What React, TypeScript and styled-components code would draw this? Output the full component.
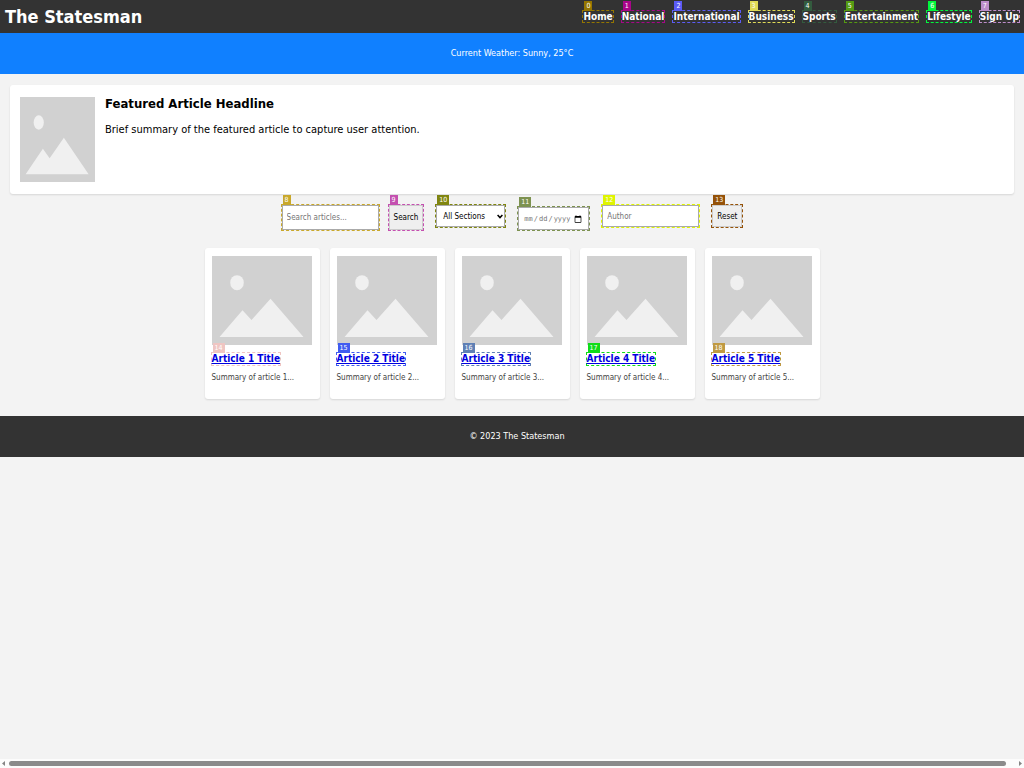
import React from "react";
import styled, { createGlobalStyle } from "styled-components";

const GlobalStyle = createGlobalStyle`
  * { box-sizing: border-box; }
  body {
    margin: 0;
    background: #f3f3f3;
    color: #000;
    font-family: "DejaVu Sans Condensed", "DejaVu Sans", sans-serif;
    font-size: 9px;
  }
`;

const Page = styled.div`
  display: flex;
  flex-direction: column;
  min-height: 100vh;
`;

const Header = styled.header`
  display: flex;
  align-items: center;
  justify-content: space-between;
  height: 33px;
  padding: 0 4px 0 5px;
  background: #333;
  color: #fff;
`;

const SiteTitle = styled.h1`
  margin: 0;
  font-size: 18px;
  line-height: 22px;
`;

const Nav = styled.nav`
  display: flex;
  gap: 7px;
`;

const Mark = styled.span<{ $color: string }>`
  position: relative;
  display: inline-flex;
  border: 1px dashed ${(p) => p.$color};
`;

const Badge = styled.span<{ $color: string }>`
  position: absolute;
  left: 1px;
  bottom: 100%;
  padding: 0 2px;
  background: ${(p) => p.$color};
  color: #fff;
  font-size: 7px;
  font-weight: 400;
  line-height: 10px;
`;

const NavLink = styled.a`
  color: #fff;
  font-size: 10px;
  font-weight: 700;
  line-height: 11px;
  text-decoration: none;
`;

const Weather = styled.section`
  background: #1080ff;
  color: #fff;
  line-height: 12px;
  padding: 14px 0 15px;
  text-align: center;
`;

const Featured = styled.article`
  display: flex;
  gap: 10px;
  margin: 11px 10px 0;
  padding: 12px 10px;
  background: #fff;
  border-radius: 3px;
  box-shadow: 0 1px 2px rgba(0, 0, 0, 0.12);
`;

const FeaturedImage = styled.svg`
  display: block;
  width: 75px;
  height: 85px;
`;

const FeaturedTitle = styled.h2`
  margin: 0 0 12px;
  font-size: 13px;
  line-height: 14px;
`;

const FeaturedText = styled.p`
  margin: 0;
  font-size: 11px;
  line-height: 14px;
`;

const Filters = styled.form`
  display: flex;
  justify-content: center;
  align-items: flex-start;
  gap: 11px;
  margin-top: 10px;
  height: 27px;
`;

const SearchGroup = styled.div`
  display: flex;
  gap: 8px;
`;

const DateGroup = styled.div`
  display: flex;
  align-self: flex-end;
`;

const TextField = styled.input<{ $tall?: boolean }>`
  width: 97px;
  height: ${(p) => (p.$tall ? 25 : 22)}px;
  padding: 0 4px;
  border: 1px solid #aaa;
  background: #fff;
  font: inherit;
  font-size: 8px;
  &::placeholder { color: #757575; }
`;

const Button = styled.button<{ $tall?: boolean }>`
  height: ${(p) => (p.$tall ? 25 : 22)}px;
  padding: 0 4px;
  border: 1px solid #ccc;
  background: #efefef;
  color: #000;
  font: inherit;
  font-size: 8px;
`;

const Select = styled.select`
  appearance: none;
  width: 69px;
  height: 22px;
  padding: 0 10px 0 6px;
  border: 1px solid #aaa;
  border-radius: 0;
  background: #fff;
  color: #000;
  font: inherit;
  font-size: 8px;
`;

const SelectArrow = styled.svg`
  position: absolute;
  right: 2px;
  top: 9px;
  width: 6px;
  height: 5px;
  fill: none;
  stroke: #000;
  stroke-width: 1.5;
  pointer-events: none;
`;

const DateField = styled.input`
  width: 71px;
  height: 23px;
  padding: 0 6px 0 4px;
  border: 1px solid #aaa;
  background: #fff;
  color: #757575;
  font-family: "DejaVu Sans Mono", monospace;
  font-size: 7px;
  &::-webkit-calendar-picker-indicator {
    width: 8px;
    height: 8px;
    padding: 0;
  }
`;

const Cards = styled.main`
  display: flex;
  flex-wrap: wrap;
  justify-content: center;
  gap: 10px;
  margin: 17px 10px;
`;

const Card = styled.article`
  width: 115px;
  padding: 8px 8px 15px 7px;
  background: #fff;
  border-radius: 3px;
  box-shadow: 0 1px 2px rgba(0, 0, 0, 0.12);
`;

const CardImage = styled.svg`
  display: block;
  width: 100%;
  height: 89px;
`;

const CardTitle = styled.h3`
  display: flex;
  margin: 7px 0 6px -1px;
  font-size: 10px;
  line-height: 12px;
`;

const CardLink = styled.a`
  color: #0000e0;
`;

const CardText = styled.p`
  margin: 0;
  color: #444;
  font-size: 8px;
  line-height: 12px;
`;

const Footer = styled.footer`
  padding: 14px 0 15px 10px;
  background: #333;
  color: #fff;
  line-height: 12px;
  text-align: center;
`;

const ScrollTrack = styled.div`
  display: flex;
  align-items: center;
  gap: 4px;
  height: 9px;
  margin-top: auto;
  padding: 0 2px;
  background: #fcfcfc;
`;

const ScrollThumb = styled.div`
  flex: 1;
  height: 5px;
  margin-right: 9px;
  border-radius: 3px;
  background: #8b8b8b;
`;

const ScrollArrow = styled.svg`
  width: 3px;
  height: 5px;
  fill: #858585;
`;

const navItems = [
  { label: "Home", color: "#957600" },
  { label: "National", color: "#a9058a" },
  { label: "International", color: "#5b5bf5" },
  { label: "Business", color: "#dfda55" },
  { label: "Sports", color: "#335b3e" },
  { label: "Entertainment", color: "#559b12" },
  { label: "Lifestyle", color: "#00f83c" },
  { label: "Sign Up", color: "#bd8dca" },
];

const cardColors = ["#efc5c2", "#405cf0", "#5f80b5", "#10dc18", "#c09a42"];

function Marked({ color, index, children }: { color: string; index: number; children: React.ReactNode }) {
  return (
    <Mark $color={color}>
      {children}
      <Badge $color={color}>{index}</Badge>
    </Mark>
  );
}

function PlaceholderShapes() {
  return (
    <>
      <rect width="100" height="100" fill="#d1d1d1" />
      <ellipse cx="25" cy="30" rx="6.8" ry="8.5" fill="#f0f0f0" />
      <path d="M7.5 91 L30.5 61 L39.5 72 L58.5 48 L91.5 91 Z" fill="#f0f0f0" />
    </>
  );
}

export default function App() {
  return (
    <>
      <GlobalStyle />
      <Page>
        <Header>
          <SiteTitle>The Statesman</SiteTitle>
          <Nav>
            {navItems.map((item, i) => (
              <Marked key={item.label} color={item.color} index={i}>
                <NavLink href="#">{item.label}</NavLink>
              </Marked>
            ))}
          </Nav>
        </Header>
        <Weather>Current Weather: Sunny, 25°C</Weather>
        <Featured>
          <FeaturedImage viewBox="0 0 100 100" preserveAspectRatio="none" aria-hidden="true">
            <PlaceholderShapes />
          </FeaturedImage>
          <div>
            <FeaturedTitle>Featured Article Headline</FeaturedTitle>
            <FeaturedText>Brief summary of the featured article to capture user attention.</FeaturedText>
          </div>
        </Featured>
        <Filters onSubmit={(e) => e.preventDefault()}>
          <SearchGroup>
            <Marked color="#c9a82a" index={8}>
              <TextField $tall type="search" placeholder="Search articles..." aria-label="Search articles" />
            </Marked>
            <Marked color="#c450b0" index={9}>
              <Button $tall type="submit">Search</Button>
            </Marked>
          </SearchGroup>
          <Marked color="#7f8510" index={10}>
            <Select aria-label="Section">
              <option>All Sections</option>
            </Select>
            <SelectArrow viewBox="0 0 6 5" aria-hidden="true">
              <path d="M0.6 1 L3 3.6 L5.4 1" />
            </SelectArrow>
          </Marked>
          <DateGroup>
            <Marked color="#7d9250" index={11}>
              <DateField type="date" aria-label="Date" />
            </Marked>
          </DateGroup>
          <Marked color="#dff500" index={12}>
            <TextField type="text" placeholder="Author" aria-label="Author" />
          </Marked>
          <Marked color="#955208" index={13}>
            <Button type="reset">Reset</Button>
          </Marked>
        </Filters>
        <Cards>
          {cardColors.map((color, i) => (
            <Card key={color}>
              <CardImage viewBox="0 0 100 100" preserveAspectRatio="none" aria-hidden="true">
                <PlaceholderShapes />
              </CardImage>
              <CardTitle>
                <Marked color={color} index={14 + i}>
                  <CardLink href="#">{`Article ${i + 1} Title`}</CardLink>
                </Marked>
              </CardTitle>
              <CardText>{`Summary of article ${i + 1}...`}</CardText>
            </Card>
          ))}
        </Cards>
        <Footer>© 2023 The Statesman</Footer>
        <ScrollTrack aria-hidden="true">
          <ScrollArrow viewBox="0 0 3 5"><path d="M3 0 L0 2.5 L3 5 Z" /></ScrollArrow>
          <ScrollThumb />
          <ScrollArrow viewBox="0 0 3 5"><path d="M0 0 L3 2.5 L0 5 Z" /></ScrollArrow>
        </ScrollTrack>
      </Page>
    </>
  );
}
